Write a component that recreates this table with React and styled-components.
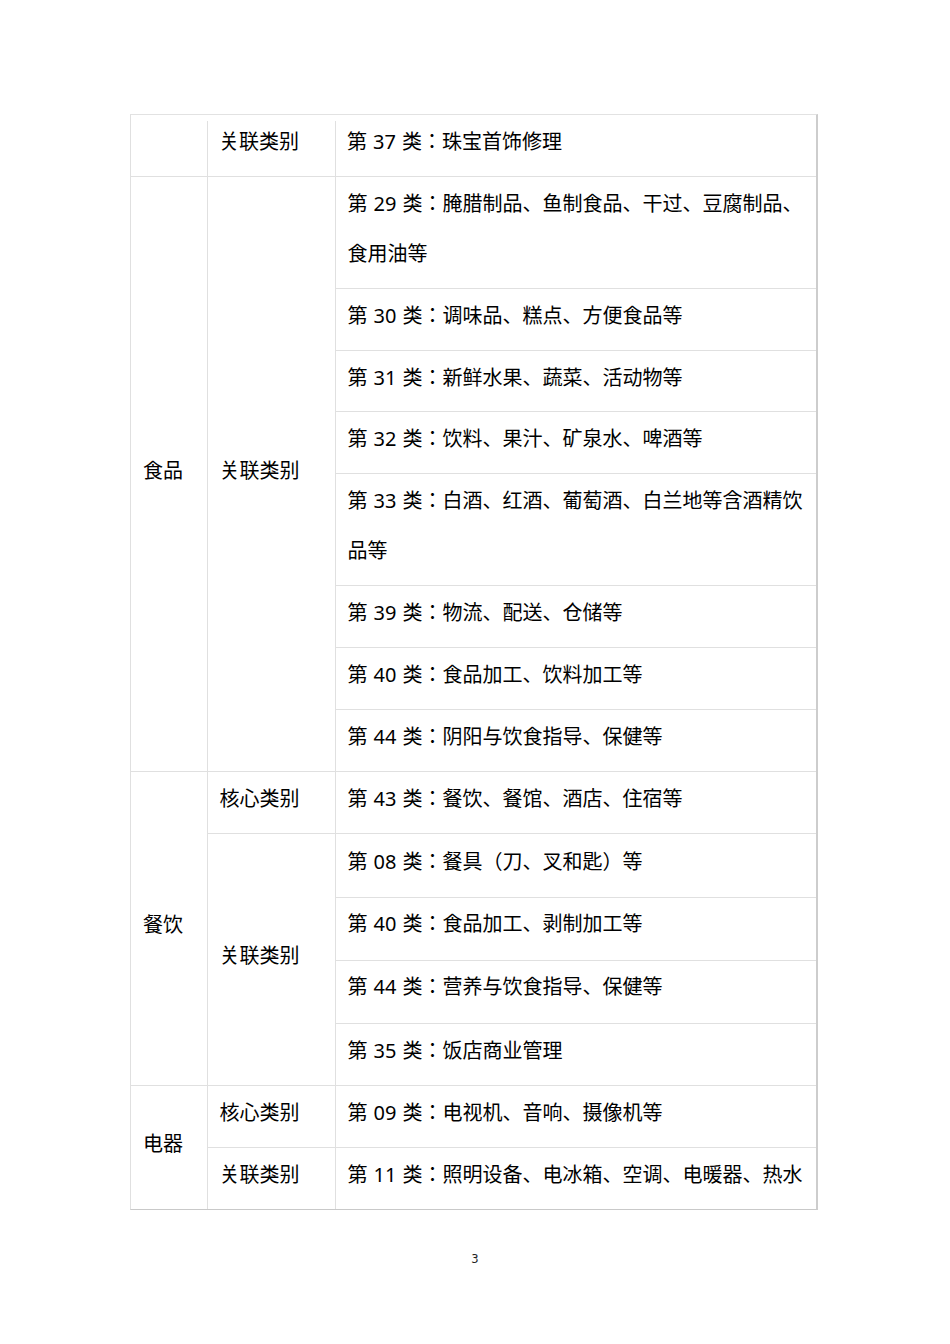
import React from "react";
import styled, { createGlobalStyle } from "styled-components";

const Global = createGlobalStyle`
  html, body { margin: 0; padding: 0; background: #fff; }
  body { font-family: "Noto Sans", "Noto Sans CJK JP", sans-serif; color: #000; }
`;

const Page = styled.div`
  width: 950px;
  min-height: 1344px;
  padding-top: 114px;
  box-sizing: border-box;
`;

const Frame = styled.div`
  width: 688px;
  margin-left: 130px;
  box-sizing: border-box;
  border-top: 1px solid #e2e2e2;
  border-left: 1px solid #e0e0e0;
  border-right: 2px solid #cdcdcd;
  border-bottom: 1px solid #c9c9c9;
`;

const Table = styled.table`
  width: 100%;
  table-layout: fixed;
  border-collapse: collapse;
  border-style: hidden;
`;

const Cell = styled.td`
  border: 1px solid #e0e0e0;
  font-size: 20px;
  line-height: 50px;
  word-spacing: 0.9px;
  padding: 2px ${(p) => (p.$wide ? "6px" : "4px")} 9px 12px;
  vertical-align: middle;
  word-break: break-all;
  ${(p) =>
    p.$continued &&
    `
    border-left-style: hidden;
    background: linear-gradient(#e0e0e0, #e0e0e0) left 6px / 1px calc(100% - 6px) no-repeat;
  `}
`;

const ItemCell = styled(Cell)`
  padding-top: ${(p) => p.$pad[0]}px;
  padding-bottom: ${(p) => p.$pad[1]}px;
`;

const PageNumber = styled.div`
  margin-top: 43px;
  text-align: center;
  font-family: "DejaVu Sans", sans-serif;
  font-size: 11.5px;
  line-height: 12px;
  color: #222;
`;

const groups = [
  {
    name: "",
    continued: true,
    rows: [{ cat: "关联类别", items: [["第 37 类：珠宝首饰修理"]] }],
  },
  {
    name: "食品",
    rows: [
      {
        cat: "关联类别",
        items: [
          ["第 29 类：腌腊制品、鱼制食品、干过、豆腐制品、食用油等"],
          ["第 30 类：调味品、糕点、方便食品等"],
          ["第 31 类：新鲜水果、蔬菜、活动物等", [2, 8]],
          ["第 32 类：饮料、果汁、矿泉水、啤酒等"],
          ["第 33 类：白酒、红酒、葡萄酒、白兰地等含酒精饮品等"],
          ["第 39 类：物流、配送、仓储等"],
          ["第 40 类：食品加工、饮料加工等"],
          ["第 44 类：阴阳与饮食指导、保健等"],
        ],
      },
    ],
  },
  {
    name: "餐饮",
    rows: [
      { cat: "核心类别", items: [["第 43 类：餐饮、餐馆、酒店、住宿等"]] },
      {
        cat: "关联类别",
        items: [
          ["第 08 类：餐具（刀、叉和匙）等", [3, 10]],
          ["第 40 类：食品加工、剥制加工等", [1, 11]],
          ["第 44 类：营养与饮食指导、保健等", [1, 11]],
          ["第 35 类：饭店商业管理"],
        ],
      },
    ],
  },
  {
    name: "电器",
    rows: [
      { cat: "核心类别", items: [["第 09 类：电视机、音响、摄像机等"]] },
      { cat: "关联类别", items: [["第 11 类：照明设备、电冰箱、空调、电暖器、热水"]] },
    ],
  },
];

function buildRows() {
  const out = [];
  groups.forEach((g, gi) => {
    const total = g.rows.reduce((n, r) => n + r.items.length, 0);
    g.rows.forEach((r, ri) => {
      r.items.forEach(([text, pad], ii) => {
        const cells = [];
        if (ri === 0 && ii === 0) {
          cells.push(
            <Cell key="g" rowSpan={total}>
              {g.name}
            </Cell>
          );
        }
        if (ii === 0) {
          cells.push(
            <Cell key="c" rowSpan={r.items.length} $continued={g.continued}>
              {r.cat}
            </Cell>
          );
        }
        cells.push(
          <ItemCell key="i" $wide $pad={pad || [2, 9]} $continued={g.continued}>
            {text}
          </ItemCell>
        );
        out.push(<tr key={`${gi}-${ri}-${ii}`}>{cells}</tr>);
      });
    });
  });
  return out;
}

export default function App() {
  return (
    <>
      <Global />
      <Page>
        <Frame>
          <Table>
            <colgroup>
              <col style={{ width: 76 }} />
              <col style={{ width: 128 }} />
              <col />
            </colgroup>
            <tbody>{buildRows()}</tbody>
          </Table>
        </Frame>
        <PageNumber>3</PageNumber>
      </Page>
    </>
  );
}
